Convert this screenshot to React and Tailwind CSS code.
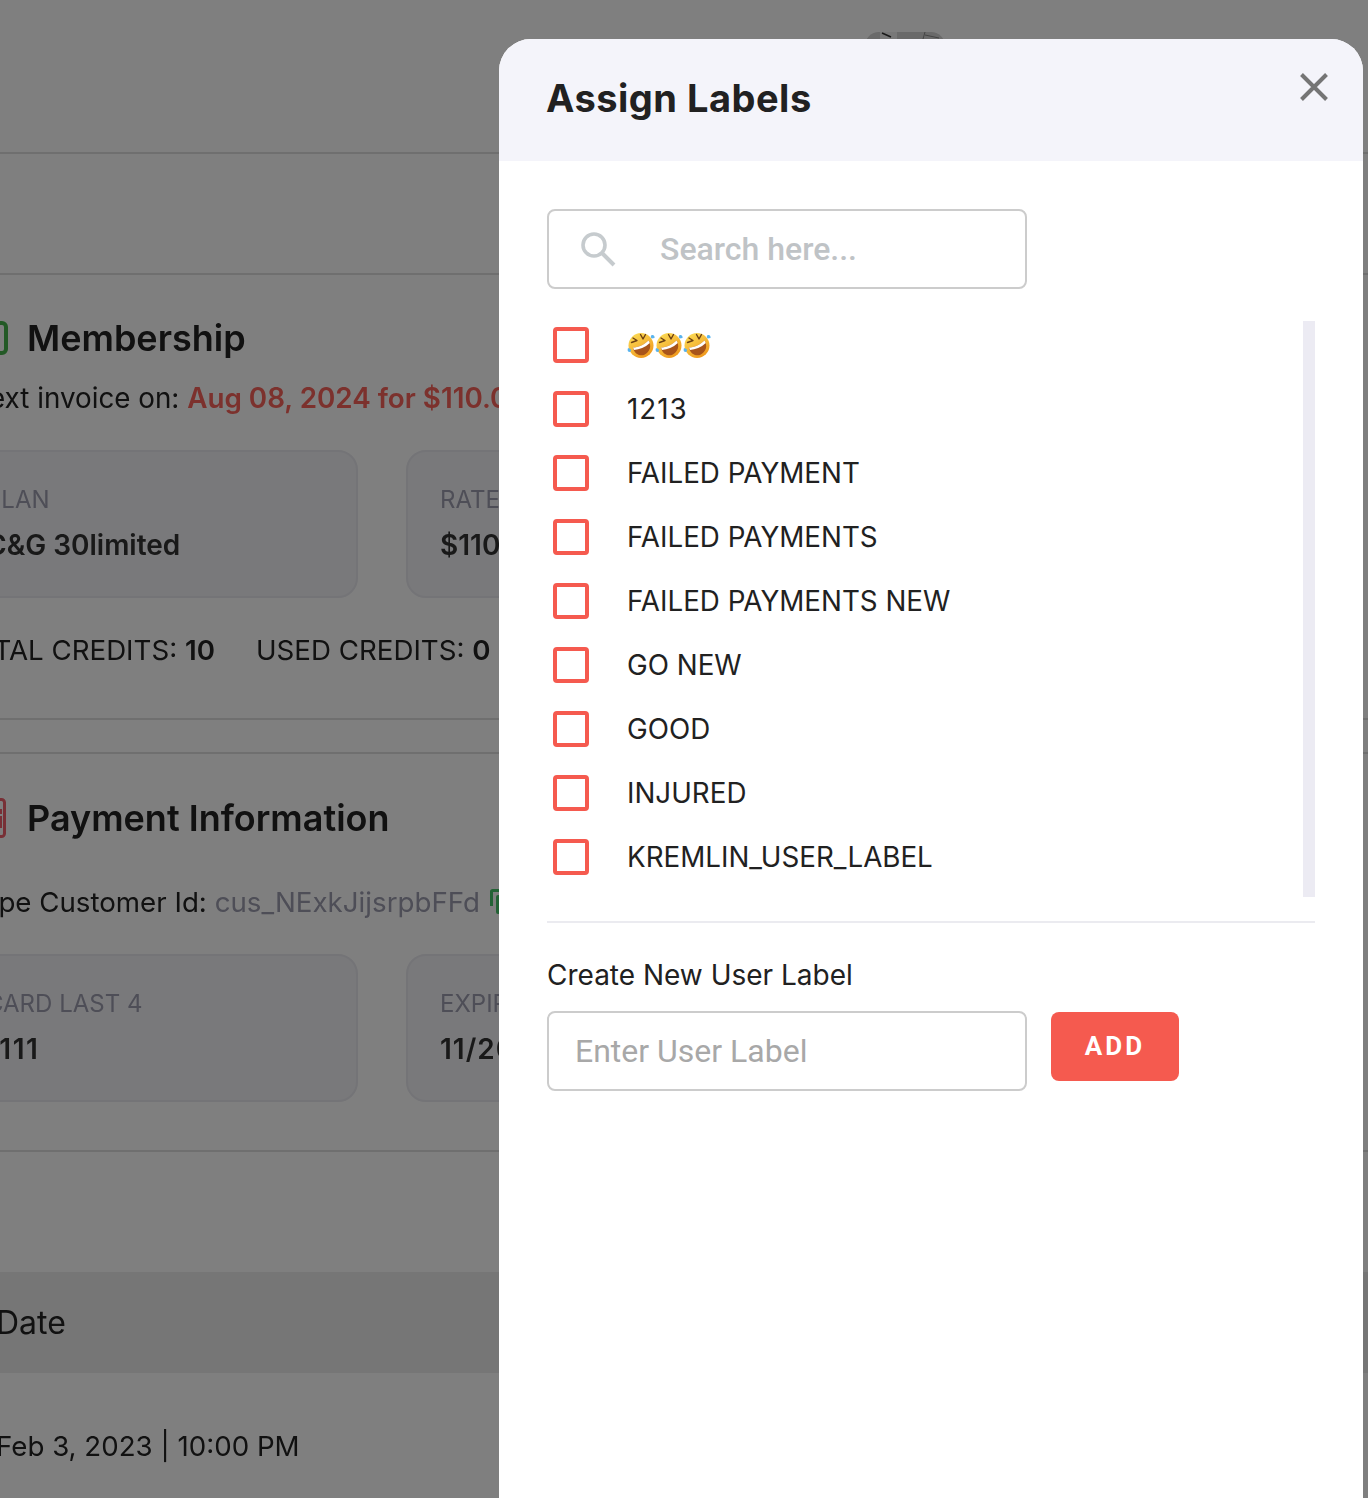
const labels = ['FAILED PAYMENT', 'FAILED PAYMENTS', 'FAILED PAYMENTS NEW', 'GO NEW', 'GOOD', 'INJURED', 'KREMLIN_USER_LABEL'];

// rolling-on-the-floor emoji, there is no colour emoji font in the sandbox
function Rofl() {
  return (
    <svg width="28" height="28" viewBox="0 0 28 28" className="shrink-0">
      <defs>
        <linearGradient id="rofl" x1="0" y1="0" x2="0.6" y2="1">
          <stop offset="0" stopColor="#fde25b" />
          <stop offset="1" stopColor="#f09a1e" />
        </linearGradient>
      </defs>
      <circle cx="14" cy="14.5" r="12.5" fill="url(#rofl)" />
      <path d="M6 16.5 C11 16.5 17 14 21.5 9.5 C25 15 23 21 17 24 C11.5 25.5 7 22 6 16.5 Z" fill="#a8541a" />
      <path d="M6 16.5 C11 16.5 17 14 21.5 9.5 L22.8 12 C18 16.5 12.5 18.5 7 19 Z" fill="#fff" />
      <path d="M4.5 11.5 L10 9.5 M6 7 L10 9.5" stroke="#6b3f14" strokeWidth="1.4" fill="none" strokeLinecap="round" />
      <path d="M13.5 3.5 L16 8 M18.5 3.5 L16 8" stroke="#6b3f14" strokeWidth="1.4" fill="none" strokeLinecap="round" />
      <path d="M1 17 C0 19.5 1 21 2.5 21 C4 21 4.5 19.5 3.5 18 Z" fill="#5ab4ee" />
      <path d="M27.5 7 C28 5 26.5 3.5 25 4 C23.5 4.5 23.5 6 24.5 7.5 Z" fill="#5ab4ee" />
    </svg>
  );
}

function Checkbox() {
  return <span className="w-9 h-9 shrink-0 border-4 border-[#f55a4f] rounded-[4px] bg-white"></span>;
}

function InfoCard({ label, value, valueClass = '' }) {
  return (
    <div className="w-[406px] h-[148px] shrink-0 rounded-[20px] border-2 border-[#e8e8ee] bg-[#f2f2f6] pl-[32px] pt-[33px]">
      <div className="text-2xl leading-[30px] text-[#9c9cae]">{label}</div>
      <div className={`mt-[12px] text-[28px] leading-[36px] font-semibold text-[#333] ${valueClass}`}>{value}</div>
    </div>
  );
}

export default function App() {
  return (
    <div className="relative w-full h-[1498px] overflow-hidden bg-white font-['Inter',sans-serif] text-[#222]">
      {/* page behind the drawer, cut off on the left */}
      <div className="-ml-[48px] w-[1416px] blur-[0.4px]">
        <div className="relative h-[154px] border-b-2 border-[#dedede]">
          <div className="absolute left-[913px] top-[32px] w-[80px] h-[80px] rounded-[14px] overflow-hidden bg-[#d4d4d4]">
            <svg width="80" height="10" viewBox="0 0 80 10" className="block">
              <path d="M15 0 H32 V8 H15 Z" fill="#f0f0f0" />
              <path d="M17 1 L26 5" stroke="#333" strokeWidth="1.5" fill="none" />
              <path d="M60 0 L58 7 M60 3 L74 6" stroke="#888" strokeWidth="1" fill="none" />
            </svg>
          </div>
        </div>
        <div className="h-[121px] border-b-2 border-[#dedede]"></div>

        <section className="h-[445px] border-b-2 border-[#dedede] pt-[41px]">
          <div className="flex items-center pl-[16px] h-[44px]">
            <span className="w-[40px] h-[34px] rounded-[6px] border-4 border-[#46b24c]"></span>
            <h2 className="ml-[19px] text-[36px] font-semibold leading-[44px]">Membership</h2>
          </div>
          <p className="mt-[20px] pl-[16px] text-[27.8px] leading-[36px]">
            Next invoice on: <span className="font-semibold text-[#f8635a]">Aug 08, 2024 for $110.00</span>
          </p>
          <div className="mt-[34px] flex gap-[48px]">
            <InfoCard label="PLAN" value="C&G 30limited" />
            <InfoCard label="RATE" value="$110.00" />
          </div>
          <div className="mt-[34px] pl-[4px] flex gap-[41px] text-[27.7px] leading-[36px]">
            <span>TOTAL CREDITS: <b className="font-semibold">10</b></span>
            <span>USED CREDITS: <b className="font-semibold">0</b></span>
          </div>
        </section>

        <div className="h-[34px] border-b-2 border-[#dedede]"></div>

        <section className="h-[398px] border-b-2 border-[#dedede] pt-[42px]">
          <div className="flex items-center pl-[16px] h-[44px]">
            <svg width="38" height="40" viewBox="0 0 38 40" className="shrink-0">
              <rect x="1.5" y="1.5" width="35" height="37" rx="3" stroke="#f0616c" strokeWidth="3" fill="none" />
              <path d="M30 11 H34 V16 H30 Z M30 18 H34 V30 H30 Z" fill="#f0616c" />
            </svg>
            <h2 className="ml-[21px] text-[36px] font-semibold leading-[44px]">Payment Information</h2>
          </div>
          <p className="mt-[44px] pl-[2px] flex items-center text-[27.7px] leading-[36px] whitespace-nowrap">
            Stripe Customer Id:&nbsp;<span className="text-[#9c9cae]">cus_NExkJijsrpbFFd</span>
            <svg width="24" height="26" viewBox="0 0 24 26" className="ml-[10px] shrink-0">
              <path d="M1.5 17 V2.5 A1 1 0 0 1 2.5 1.5 H15" stroke="#46c46a" strokeWidth="3" fill="none" />
              <rect x="6" y="6" width="16" height="19" rx="2" fill="#46c46a" />
            </svg>
          </p>
          <div className="mt-[34px] flex gap-[48px]">
            <InfoCard label="CARD LAST 4" value="1111" valueClass="tracking-[1.5px]" />
            <InfoCard label="EXPIRES" value="11/2025" valueClass="tracking-[1px]" />
          </div>
        </section>

        <div className="mt-[120px] h-[101px] bg-[#ececec] flex items-center pl-[44px] text-[32px]">Date</div>
        <div className="mt-[53px] pl-[44px] text-[27.7px] leading-[40px] whitespace-nowrap">Feb 3, 2023 | 10:00 PM</div>
      </div>

      {/* dim layer */}
      <div className="absolute inset-0 bg-black/50"></div>

      {/* drawer */}
      <aside className="absolute left-[499px] top-[39px] w-[864px] bottom-0 bg-white rounded-t-[32px] overflow-hidden">
        <header className="h-[122px] bg-[#f4f4fa] flex items-center justify-between pl-[47px] pr-[34px]">
          <h1 className="text-[38px] leading-[48px] font-bold tracking-[0.5px] text-[#212121] -mt-[4px]">Assign Labels</h1>
          <button className="-mt-[26px]" aria-label="Close">
            <svg width="30" height="30" viewBox="0 0 30 30" className="block">
              <path d="M2.5 2.5 L27.5 27.5 M27.5 2.5 L2.5 27.5" stroke="#757575" strokeWidth="4" fill="none" />
            </svg>
          </button>
        </header>

        <div className="px-[48px] pt-[48px]">
          <div className="w-[480px] h-[80px] border-2 border-[#cccccc] rounded-[8px] flex items-center pl-[31px]">
            <svg width="36" height="36" viewBox="0 0 36 36" className="shrink-0">
              <circle cx="14" cy="14" r="11" stroke="#c6cbce" strokeWidth="3.6" fill="none" />
              <path d="M22 22 L34 34" stroke="#c6cbce" strokeWidth="4" fill="none" />
            </svg>
            <input
              placeholder="Search here..."
              className="ml-[44px] flex-1 min-w-0 outline-none bg-transparent font-['Roboto',sans-serif] font-medium text-[32px] placeholder:text-[#bfc3c6]"
            />
          </div>

          <div className="relative mt-[32px] h-[576px] flow-root">
            <ul className="pl-[6px] -mt-[8px]">
              <li className="h-[64px] flex items-center">
                <Checkbox />
                <span className="ml-[38px] flex">
                  <Rofl /><Rofl /><Rofl />
                </span>
              </li>
              <li className="h-[64px] flex items-center">
                <Checkbox />
                <span className="ml-[38px] text-[27.75px] leading-[36px] tracking-[1px] text-[#212121]">1213</span>
              </li>
              {labels.map((label) => (
                <li key={label} className="h-[64px] flex items-center">
                  <Checkbox />
                  <span className="ml-[38px] text-[27.75px] leading-[36px] text-[#212121]">{label}</span>
                </li>
              ))}
            </ul>
            <div className="absolute right-0 top-0 bottom-0 w-[12px] bg-[#ecebf3]"></div>
          </div>

          <div className="mt-[24px] h-[2px] bg-[#ebebf0]"></div>

          <label className="block mt-[34px] text-[28px] leading-[36px] text-[#212121]">Create New User Label</label>
          <div className="mt-[18px] flex items-start gap-[24px]">
            <input
              placeholder="Enter User Label"
              className="w-[480px] h-[80px] border-2 border-[#cccccc] rounded-[8px] pl-[26px] outline-none font-['Roboto',sans-serif] text-[32px] placeholder:text-[#a8a8a8]"
            />
            <button className="w-[128px] h-[69px] mt-px rounded-[8px] bg-[#f55a4f] text-white font-['Roboto',sans-serif] font-bold text-[26px] tracking-[3px]">
              ADD
            </button>
          </div>
        </div>
      </aside>
    </div>
  );
}
